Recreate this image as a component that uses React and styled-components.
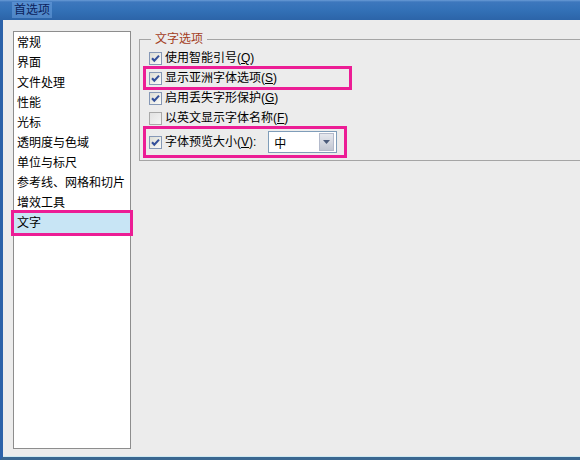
import React from 'react'
import styled, {createGlobalStyle} from 'styled-components'

const GlobalStyle = createGlobalStyle`
    html, body {
        margin: 0;
        padding: 0;
        background: #ececec;
    }
    body {
        font-family: "Liberation Sans", "Noto Sans CJK SC", sans-serif;
        font-size: 12px;
        color: #000;
    }
`

const categories = ['常规', '界面', '文件处理', '性能', '光标', '透明度与色域', '单位与标尺', '参考线、网格和切片', '增效工具', '文字']

const options = [
    {label: '使用智能引号', key: 'Q', checked: true},
    {label: '显示亚洲字体选项', key: 'S', checked: true, marked: true, width: 205},
    {label: '启用丢失字形保护', key: 'G', checked: true},
    {label: '以英文显示字体名称', key: 'F', checked: false},
]

function CheckBox({checked}) {
    return (
        <Box $checked={checked}>
            {checked && (
                <svg width="11" height="11" viewBox="0 0 11 11">
                    <path d="M2 5.2 L4.3 7.6 L9 2.6" fill="none" stroke="#34509a" strokeWidth="2.1" />
                </svg>
            )}
        </Box>
    )
}

function App() {
    return (
        <Window>
            <GlobalStyle />
            <TitleBar>
                <Title>首选项</Title>
            </TitleBar>
            <Body>
                <CategoryList>
                    {categories.map(name => (
                        <Category key={name} $selected={name === '文字'}>{name}</Category>
                    ))}
                </CategoryList>
                <Group>
                    <Legend>文字选项</Legend>
                    {options.map(opt => (
                        <Row key={opt.key} $marked={opt.marked} $width={opt.width}>
                            <CheckBox checked={opt.checked} />
                            <Label>{opt.label}(<u>{opt.key}</u>)</Label>
                        </Row>
                    ))}
                    <Row $marked $width={200} $height={28}>
                        <CheckBox checked />
                        <Label>字体预览大小(<u>V</u>):</Label>
                        <Combo>
                            <ComboText>中</ComboText>
                            <ComboButton>
                                <svg width="7" height="4" viewBox="0 0 7 4">
                                    <path d="M0 0 H7 L3.5 4 Z" fill="#4b5b7a" />
                                </svg>
                            </ComboButton>
                        </Combo>
                    </Row>
                </Group>
            </Body>
        </Window>
    )
}

export default App

const Window = styled.div`
    width: 580px;
    height: 460px;
    display: flex;
    flex-direction: column;
    overflow: hidden;
    background: #ececec;
`

const TitleBar = styled.div`
    flex: none;
    height: 20px;
    display: flex;
    align-items: center;
    padding-left: 12px;
    background: linear-gradient(to bottom, #6a9bd6 0, #3d77bd 2px, #3270b6 55%, #2c64a8 100%);
`

const Title = styled.span`
    padding: 0 2px;
    font-size: 12px;
    line-height: 16px;
    color: #0b1f5c;
    background: rgba(120, 170, 230, 0.45);
`

const Body = styled.div`
    flex: 1;
    min-height: 0;
    display: flex;
    align-items: flex-start;
    padding: 11px 0 8px 10px;
    border-left: 3px solid #2c62a9;
    border-bottom: 3px solid #3a6790;
    box-shadow: inset 0 -1px 0 #cfe9f1;
    background: #ececec;
`

const CategoryList = styled.div`
    box-sizing: border-box;
    width: 118px;
    align-self: stretch;
    padding-top: 1px;
    background: #fff;
    border: 1px solid #8d8d8d;
`

const Category = styled.div`
    height: 20px;
    line-height: 20px;
    padding-left: 3px;
    white-space: nowrap;
    background: ${p => p.$selected ? '#c8e5f5' : 'transparent'};
    outline: ${p => p.$selected ? '3px solid #ec1d95' : 'none'};
`

const Group = styled.fieldset`
    flex: 1;
    margin: 0 -30px 0 8px;
    padding: 1px 0 4px 5px;
    border: 1px solid #a5a5a5;
`

const Legend = styled.legend`
    margin-left: 6px;
    padding: 0 4px;
    font-size: 12px;
    line-height: 16px;
    color: #a33d1d;
`

const Row = styled.div`
    box-sizing: border-box;
    display: flex;
    align-items: center;
    width: ${p => p.$width ? `${p.$width}px` : 'auto'};
    height: ${p => p.$height || 20}px;
    padding-left: 4px;
    outline: ${p => p.$marked ? '3px solid #ec1d95' : 'none'};
    outline-offset: -1px;
`

const Box = styled.span`
    box-sizing: border-box;
    flex: none;
    width: 13px;
    height: 13px;
    display: flex;
    align-items: center;
    justify-content: center;
    border: 1px solid ${p => p.$checked ? '#8698b6' : '#a9a9a9'};
    background: ${p => p.$checked
        ? 'linear-gradient(135deg, #dcddd6, #fbfbf8)'
        : 'linear-gradient(135deg, #e2e2e2, #f4f4f4)'};
`

const Label = styled.span`
    margin-left: 3px;
    white-space: nowrap;
    line-height: 16px;

    u {
        text-decoration: underline;
    }
`

const Combo = styled.div`
    box-sizing: border-box;
    width: 69px;
    height: 22px;
    margin-left: 12px;
    display: flex;
    align-items: center;
    background: #fff;
    border: 1px solid #7f9db9;
`

const ComboText = styled.span`
    flex: 1;
    padding-left: 5px;
`

const ComboButton = styled.span`
    box-sizing: border-box;
    width: 15px;
    height: 18px;
    margin-right: 2px;
    display: flex;
    align-items: center;
    justify-content: center;
    border: 1px solid #b3bacb;
    background: linear-gradient(to bottom, #e6e8ee, #c2c7d2);
`
